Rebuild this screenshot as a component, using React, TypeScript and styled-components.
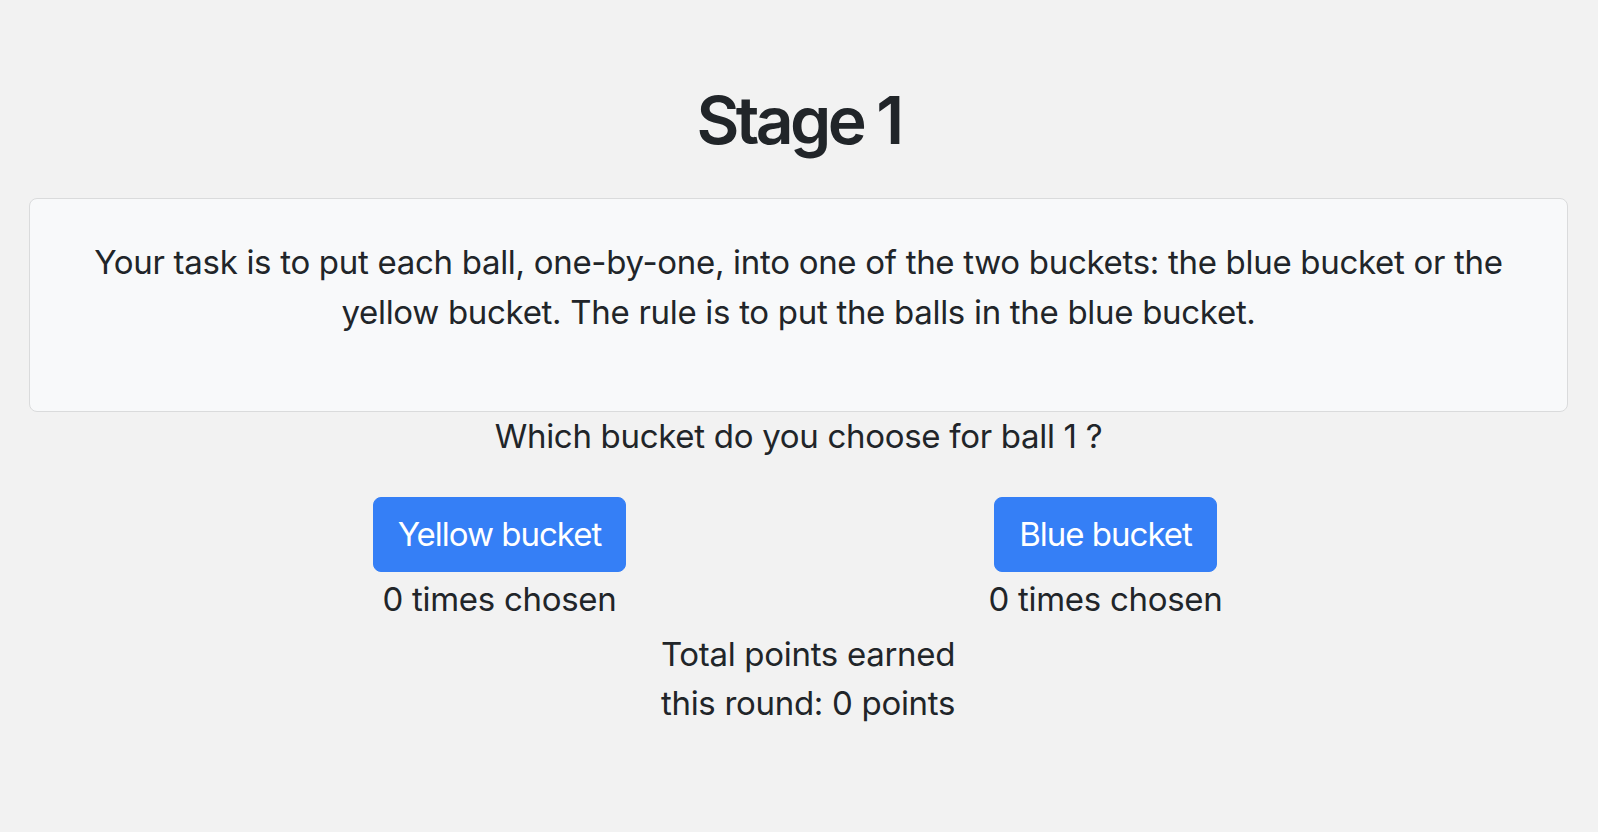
import React from "react";
import styled, { createGlobalStyle } from "styled-components";

const GlobalStyle = createGlobalStyle`
  html, body {
    margin: 0;
    padding: 0;
    background: #f2f2f2;
  }
  body {
    font-family: Inter, "Noto Sans", "Liberation Sans", sans-serif;
    color: #212529;
    font-size: 33px;
    line-height: 1.5;
    letter-spacing: -0.3px;
  }
`;

const Page = styled.main`
  padding: 0 30px 0 29px;
`;

const Title = styled.h1`
  margin: 0 0 38px;
  padding-top: 81px;
  font-size: 66px;
  font-weight: 600;
  line-height: 1.2;
  letter-spacing: -3.6px;
  text-align: center;
`;

const Card = styled.section`
  background: #f8f9fa;
  border: 1px solid #dadbdc;
  border-radius: 8px;
  padding: 39px 40px 41px;
  text-align: center;
`;

const Instructions = styled.p`
  margin: 0 0 33px;
`;

const Question = styled.p`
  margin: 0;
  text-align: center;
`;

const Choices = styled.div`
  display: grid;
  grid-template-columns: repeat(3, 303px);
  justify-content: center;
  margin: 35px 0 0 8px;
  text-align: center;
`;

const Choice = styled.div<{ $col: number }>`
  grid-column: ${(p) => p.$col};
  display: flex;
  flex-direction: column;
  align-items: center;
`;

const BucketButton = styled.button`
  font: inherit;
  letter-spacing: -1px;
  color: #fff;
  background: #357ff6;
  border: 1px solid #357ff6;
  border-radius: 8px;
  padding: 12px 24px;
  line-height: 1.5;
  cursor: pointer;
`;

const Count = styled.div`
  margin-top: 3px;
`;

const Total = styled.div`
  grid-column: 2;
  margin: 5px -6px 0 5px;
`;

export default function App() {
  return (
    <>
      <GlobalStyle />
      <Page>
        <Title>Stage 1</Title>
        <Card>
          <Instructions>
            Your task is to put each ball, one-by-one, into one of the two buckets: the blue
            bucket or the yellow bucket. The rule is to put the balls in the blue bucket.
          </Instructions>
        </Card>
        <Question>Which bucket do you choose for ball 1 ?</Question>
        <Choices>
          <Choice $col={1}>
            <BucketButton>Yellow bucket</BucketButton>
            <Count>0 times chosen</Count>
          </Choice>
          <Choice $col={3}>
            <BucketButton>Blue bucket</BucketButton>
            <Count>0 times chosen</Count>
          </Choice>
          <Total>Total points earned this round: 0 points</Total>
        </Choices>
      </Page>
    </>
  );
}
